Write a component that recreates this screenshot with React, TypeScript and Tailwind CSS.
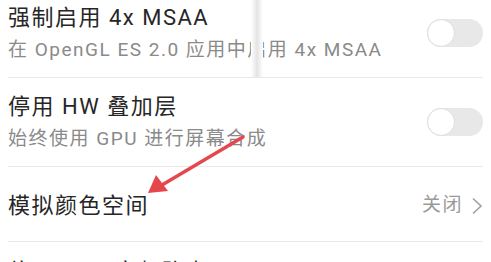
import React from 'react';

const Toggle: React.FC = () => (
  <div className="relative h-[28px] w-[56px] shrink-0 rounded-full bg-[#e8e8e8]">
    <div className="absolute left-0 top-0 h-[28px] w-[28px] rounded-full border border-[#dedede] bg-white" />
  </div>
);

const SwitchRow: React.FC<{ title: string; sub: string }> = ({ title, sub }) => (
  <div className="flex h-[89px] items-center justify-between border-b border-[#e9e9e9]">
    <div className="flex flex-col">
      <span className="text-[22px] leading-[33px] tracking-[1.5px] text-[#262626]">{title}</span>
      <span className="text-[19px] leading-[32px] tracking-[1.5px] text-[#8a8a8a]">{sub}</span>
    </div>
    <Toggle />
  </div>
);

export default function App() {
  return (
    <div
      className="relative h-[262px] w-[491px] overflow-hidden bg-white"
      style={{ fontFamily: 'Roboto, "Noto Sans CJK SC", sans-serif' }}
    >
      <div className="-mt-[11px] ml-[8px] mr-[8px]">
        <SwitchRow title="强制启用 4x MSAA" sub="在 OpenGL ES 2.0 应用中启用 4x MSAA" />
        <SwitchRow title="停用 HW 叠加层" sub="始终使用 GPU 进行屏幕合成" />
        <div className="flex h-[75px] items-center justify-between border-b border-[#e9e9e9] pt-[3px]">
          <span className="text-[22px] leading-[33px] tracking-[1.5px] text-[#262626]">模拟颜色空间</span>
          <div className="flex items-center gap-[8px] text-[19px] tracking-[1.5px] text-[#9a9a9a]">
            <span>关闭</span>
            <svg width="12" height="18" viewBox="0 0 12 18" fill="none">
              <path d="M2 1.5 L10 9 L2 16.5" stroke="#a0a0a0" strokeWidth="1.6" />
            </svg>
          </div>
        </div>
        <div className="flex h-[75px] items-start pt-[13px]">
          <span className="text-[22px] leading-[33px] tracking-[1.5px] text-[#262626]">停用 USB 音频路由</span>
        </div>
      </div>

      {/* scan artifact band */}
      <div className="absolute left-[251px] top-0 h-[77px] w-[12px] bg-gradient-to-r from-white via-[#e4e4e4] to-white" />

      {/* red annotation arrow */}
      <svg className="absolute left-0 top-0" width="491" height="262" viewBox="0 0 491 262">
        <line x1="243" y1="137" x2="162" y2="185" stroke="#e4484d" strokeWidth="3.5" strokeLinecap="round" />
        <polygon points="148,193 156,175 168,191" fill="#e4484d" />
      </svg>
    </div>
  );
}
